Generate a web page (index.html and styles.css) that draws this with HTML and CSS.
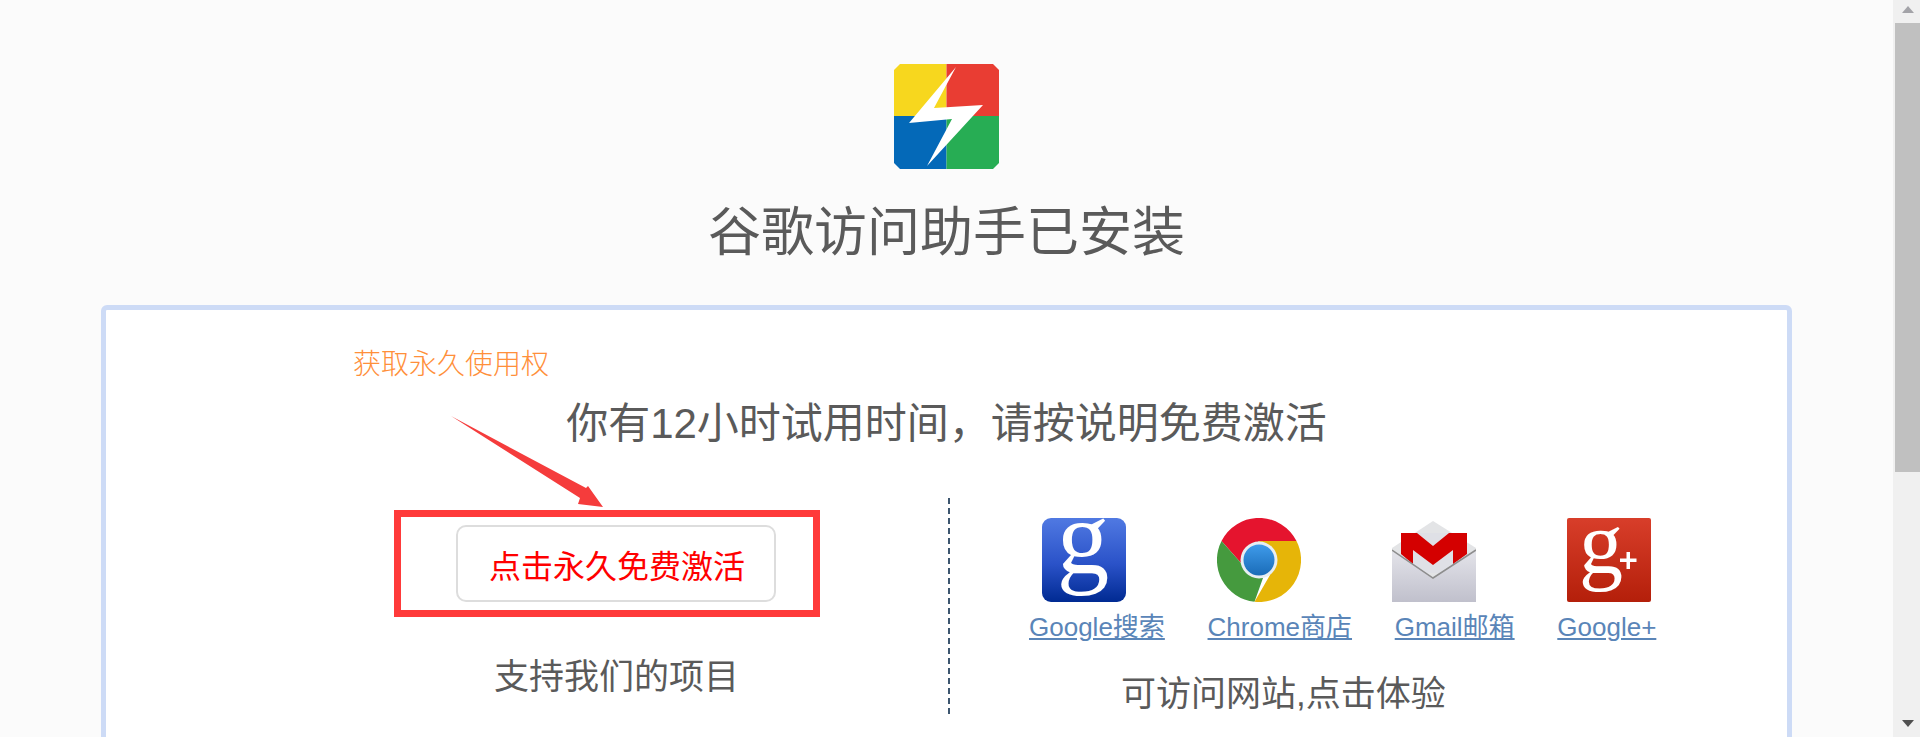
FILE: index.html
```html
<!DOCTYPE html>
<html lang="zh-CN">
<head>
<meta charset="utf-8">
<title>谷歌访问助手已安装</title>
<link rel="stylesheet" href="styles.css">
</head>
<body>
<main class="page">
  <svg class="logo" viewBox="0 0 105 105" aria-label="谷歌访问助手">
    <path d="M6 0H52.500V52H0V6Z" fill="#f7d71e"/>
    <path d="M52.500 0H99L105 6V52H52.500Z" fill="#e93d33"/>
    <path d="M0 52H52.500V105H6L0 99Z" fill="#0469b8"/>
    <path d="M52.500 52H105V99L99 105H52.500Z" fill="#27ad54"/>
    <polygon points="62,3 40,44 89,41 33,102 58,55 15,59" fill="#fff"/>
  </svg>
  <h1 class="title">谷歌访问助手已安装</h1>
  <section class="card">
    <svg class="arrow" viewBox="0 0 160 100" aria-hidden="true">
      <polygon points="0,1 135,73 137,71 152,92 127,89 129,83" fill="#f53c3c"/>
    </svg>
    <p class="hint">获取永久使用权</p>
    <h2 class="lead">你有12小时试用时间&#xFF0C;请按说明免费激活</h2>
    <div class="columns">
      <div class="col-left">
        <div class="redbox"><a class="activate">点击永久免费激活</a></div>
        <h3 class="support">支持我们的项目</h3>
      </div>
      <div class="divider"></div>
      <div class="col-right">
        <div class="icons">
          <svg class="icon" viewBox="0 0 84 84" aria-label="Google">
            <defs>
              <linearGradient id="gb" x1="0" y1="0" x2="0" y2="1"><stop offset="0" stop-color="#5079e2"/><stop offset="0.55" stop-color="#2a52c8"/><stop offset="1" stop-color="#002a92"/></linearGradient>
            </defs>
            <rect width="84" height="84" rx="9" fill="url(#gb)"/>
            <text class="g-big" x="41" y="55" text-anchor="middle">g</text>
          </svg>
          <svg class="icon" viewBox="0 0 84 84" aria-label="Chrome">
            <defs>
              <linearGradient id="hub" x1="0" y1="0" x2="0" y2="1"><stop offset="0" stop-color="#3f9bea"/><stop offset="1" stop-color="#1a6cb8"/></linearGradient>
            </defs>
            <path d="M4.500 23A42 42 0 0 1 79.500 23L42 23L24 45Z" fill="#e5142e"/>
            <path d="M4.500 23L24 45L46 60L37.500 83.800A42 42 0 0 1 4.500 23Z" fill="#459a3e"/>
            <path d="M79.500 23A42 42 0 0 1 37.500 83.800L53 57L42 23Z" fill="#e6b508"/>
            <circle cx="42" cy="42" r="18.500" fill="#e8eef2"/>
            <circle cx="42" cy="42" r="15.500" fill="url(#hub)"/>
          </svg>
          <svg class="icon" viewBox="0 0 84 84" aria-label="Gmail">
            <defs>
              <linearGradient id="gm" x1="0" y1="0" x2="0" y2="1"><stop offset="0" stop-color="#e4e4ea"/><stop offset="1" stop-color="#c0c0cc"/></linearGradient>
            </defs>
            <polygon points="0,30 41,3 84,30 84,60 0,60" fill="#e3e4e6"/>
            <rect x="9" y="15" width="66" height="40" fill="#dfe0e6"/>
            <polygon points="9,15 25,15 41,28 57,15 75,15 75,36 61,46 61,32 41,47 21,32 21,46 9,36" fill="#d40000"/>
            <polygon points="0,32 41,60 84,32 84,84 0,84" fill="url(#gm)"/>
            <polyline points="0,32 41,60 84,32" fill="none" stroke="#8d8d8d" stroke-width="1.500"/>
          </svg>
          <svg class="icon" viewBox="0 0 84 84" aria-label="Google+">
            <defs>
              <linearGradient id="gp" x1="0" y1="0" x2="0" y2="1"><stop offset="0" stop-color="#d83e2a"/><stop offset="1" stop-color="#b41f0a"/></linearGradient>
            </defs>
            <rect width="84" height="84" rx="2" fill="url(#gp)"/>
            <text class="g-small" x="34" y="55" text-anchor="middle">g</text>
            <rect x="59.500" y="34" width="3.500" height="17" fill="#fff"/>
            <rect x="53" y="40.500" width="16.500" height="3.500" fill="#fff"/>
          </svg>
        </div>
        <div class="links">
          <a class="link" href="#">Google搜索</a>
          <a class="link" href="#">Chrome商店</a>
          <a class="link" href="#">Gmail邮箱</a>
          <a class="link" href="#">Google+</a>
        </div>
        <h3 class="visit">可访问网站,点击体验</h3>
      </div>
    </div>
  </section>
</main>
<aside class="scrollbar" aria-hidden="true">
  <span class="arrow-up"></span>
  <span class="thumb"></span>
  <span class="arrow-down"></span>
</aside>
</body>
</html>
```
FILE: styles.css
```css
* { box-sizing: border-box; }
html, body { height: 100%; margin: 0; }
body {
  display: flex;
  overflow: hidden;
  background: #fbfbfb;
  color: #5a5a5a;
  font-family: "Liberation Sans", "Noto Sans CJK SC", sans-serif;
}
.page {
  flex: 1;
  min-width: 0;
  display: flex;
  flex-direction: column;
  align-items: center;
  padding: 64px 101px 0;
}
.logo { width: 105px; height: 105px; flex: none; display: block; }
.title {
  margin: 28px 0 36px;
  font-size: 53px;
  line-height: 72px;
  font-weight: 400;
  color: #5a5a5a;
}
.card {
  position: relative;
  align-self: stretch;
  flex: none;
  height: 600px;
  background: #fff;
  border: 5px solid #cddbf6;
  border-radius: 6px;
  padding-top: 35px;
}
.arrow {
  position: absolute;
  left: 345px;
  top: 105px;
  width: 160px;
  height: 100px;
}
.hint {
  margin: 0 0 9px 247px;
  font-size: 28px;
  line-height: 40px;
  font-weight: 300;
  color: #ff8f3a;
}
.lead {
  margin: 0;
  font-size: 42px;
  line-height: 60px;
  font-weight: 400;
  text-align: center;
  color: #5a5a5a;
}
.columns { display: flex; margin-top: 44px; }
.col-left { width: 842px; flex: none; padding: 12px 0 0 288px; }
.redbox {
  width: 426px;
  height: 107px;
  border: 7px solid #ff3a3a;
  padding: 8px 0 0 55px;
}
.activate {
  display: flex;
  align-items: center;
  justify-content: center;
  width: 320px;
  height: 77px;
  padding-left: 2px;
  background: #fff;
  border: 2px solid #ddd;
  border-radius: 10px;
  color: #f00;
  font-size: 32px;
}
.support {
  margin: 35px 0 0 100px;
  font-size: 35px;
  line-height: 50px;
  font-weight: 400;
  color: #5a5a5a;
}
.divider {
  flex: none;
  width: 2px;
  height: 216px;
  background: repeating-linear-gradient(to bottom, #3d566f 0 6px, transparent 6px 10px);
}
.col-right { flex: 1; padding-top: 20px; }
.icons { display: flex; gap: 91px; margin-left: 92px; }
.icon { width: 84px; height: 84px; flex: none; display: block; }
.g-big {
  font-family: "Liberation Serif", serif;
  font-size: 105px;
  fill: #fff;
}
.g-small {
  font-family: "Liberation Serif", serif;
  font-size: 88px;
  fill: #fff;
}
.links { display: flex; gap: 42.700px; margin: 9px 0 0 79px; }
.link {
  font-size: 26px;
  line-height: 32px;
  color: #5a85b8;
  white-space: nowrap;
}
.visit {
  margin: 26px 0 0 171px;
  font-size: 35px;
  line-height: 50px;
  font-weight: 400;
  color: #5a5a5a;
}
.scrollbar {
  flex: none;
  width: 27px;
  background: #f0f0f0;
  display: flex;
  flex-direction: column;
  align-items: flex-end;
  padding-top: 6px;
}
.arrow-up, .arrow-down {
  width: 0;
  height: 0;
  margin-right: 6px;
  border-left: 6.500px solid transparent;
  border-right: 6.500px solid transparent;
}
.arrow-up { border-bottom: 7px solid #a3a3a8; }
.arrow-down { border-top: 7px solid #505050; margin-top: 248px; }
.thumb { width: 25px; height: 449px; margin-top: 10px; background: #c0c0c0; }
```
